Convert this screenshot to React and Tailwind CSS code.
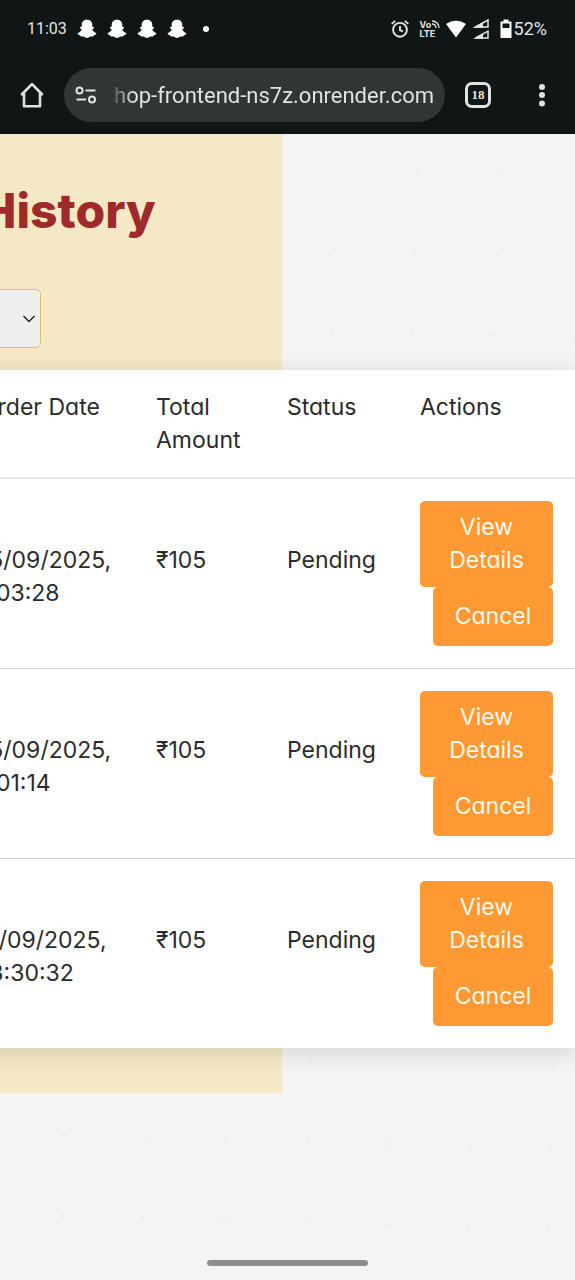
import React from "react";

const orders = [
  { id: 1, date: "15/09/2025,", time: "1:03:28", total: "₹105", status: "Pending" },
  { id: 2, date: "15/09/2025,", time: "1:01:14", total: "₹105", status: "Pending" },
  { id: 3, date: "11/09/2025,", time: "13:30:32", total: "₹105", status: "Pending" },
];

function Ghost() {
  return (
    <svg viewBox="0 0 20 20" className="h-5 w-5 shrink-0 fill-white" aria-hidden="true">
      <path d="M10 .8C6.800 .8 4.800 2.900 4.700 5.600L4.800 7.800C4.200 8 3.400 7.800 3 8.200C2.700 8.800 3.300 9.500 4.700 10.100C4.600 11.500 2.900 13.400 .7 14.300C.4 15.200 1.500 16 3.300 16.400C3.700 16.900 3.700 17.400 4.300 17.500C5.300 17.600 6.200 17.300 7.200 17.800C8 18.300 8.800 19 10 19C11.200 19 12 18.300 12.800 17.800C13.800 17.300 14.700 17.600 15.700 17.500C16.300 17.400 16.300 16.900 16.700 16.400C18.500 16 19.600 15.200 19.300 14.300C17.100 13.400 15.400 11.500 15.300 10.100C16.700 9.500 17.300 8.800 17 8.200C16.600 7.800 15.800 8 15.200 7.800L15.300 5.600C15.200 2.900 13.200 .8 10 .8Z" />
    </svg>
  );
}

function StatusBar() {
  return (
    <div className="flex h-[58px] items-center justify-between pr-7 pl-[27px] text-white">
      <div className="flex items-center gap-[10px]">
        <span className="font-[Roboto,sans-serif] text-[16px] leading-5 text-[#e4e6e6]">11:03</span>
        <Ghost />
        <Ghost />
        <Ghost />
        <Ghost />
        <span className="ml-[6px] h-[6px] w-[6px] rounded-full bg-white" />
      </div>
      <div className="flex items-center">
        <svg viewBox="0 0 20 20" className="h-5 w-5 fill-none stroke-[#e4e6e6]" strokeWidth="1.9" aria-hidden="true">
          <circle cx="10" cy="10.800" r="6.900" />
          <path d="M10 7V11.300L13 12.300M1.700 4.900L5.200 1.900M18.300 4.900L14.800 1.900" />
        </svg>
        <div className="relative ml-[10px] w-5 font-[Inter,sans-serif] text-[9px] leading-[9px] font-bold text-[#e4e6e6]">
          <div>Vo</div>
          <div>LTE</div>
          <svg viewBox="0 0 8 8" className="absolute top-0 right-0 h-2 w-2 fill-none stroke-[#e4e6e6]" strokeWidth="1.300" aria-hidden="true">
            <path d="M0 1C4 1 7 4 7 8M0 4C2.500 4 4 5.500 4 8" />
          </svg>
        </div>
        <svg viewBox="0 0 20 18" className="ml-[6px] h-[18px] w-5 fill-white" aria-hidden="true">
          <path d="M0 4C6-.5 14-.5 20 4L10 17.500Z" />
        </svg>
        <svg viewBox="0 0 16 20" className="ml-[7px] h-5 w-4 fill-none stroke-[#e4e6e6]" strokeWidth="1.500" aria-hidden="true">
          <path d="M2.500 8L15 1V8ZM2.500 19L15 12.200V19Z" />
          <path d="M0 8.800L10 3.200V8.800ZM0 19.800L10 14.500V19.800Z" fill="#e4e6e6" stroke="none" />
        </svg>
        <svg viewBox="0 0 12 20" className="ml-[11px] h-5 w-3" aria-hidden="true">
          <path d="M3.500 .5H8.500V2.500H11.500V19H.5V2.500H3.500Z" fill="white" />
          <path d="M2.500 4.500H9.500V9H2.500Z" fill="#101515" />
        </svg>
        <span className="ml-[2px] font-[Roboto,sans-serif] text-[18px] leading-5 text-[#e4e6e6]">52%</span>
      </div>
    </div>
  );
}

function AddressBar() {
  return (
    <div className="flex h-[76px] items-start pt-[10px] pr-[22px] pl-5">
      <button type="button" aria-label="Home" className="mt-[14px] h-[26px] w-6 shrink-0">
        <svg viewBox="0 0 24 26" className="h-[26px] w-6 fill-none stroke-[#dfe3e1]" strokeWidth="2.600" strokeLinejoin="round">
          <path d="M1.200 13L12 2.200L22.800 13M4 11V24.300H20V11" />
        </svg>
      </button>
      <div className="ml-5 flex h-[54px] min-w-0 flex-1 items-center rounded-full bg-[#303635] pr-[11px] pl-[11px]">
        <button type="button" aria-label="Site settings" className="h-5 w-[22px] shrink-0">
          <svg viewBox="0 0 22 20" className="h-5 w-[22px] fill-none stroke-[#dfe3e1]" strokeWidth="2">
            <circle cx="4.500" cy="5.500" r="3" />
            <circle cx="17" cy="14.500" r="3" />
            <path d="M10.500 5.500H20.500M1.500 14.500H11" />
          </svg>
        </button>
        <div className="ml-3 flex min-w-0 flex-1 justify-end overflow-hidden pt-[2px] [mask-image:linear-gradient(to_right,transparent,black_24px)]">
          <span className="font-[Roboto,sans-serif] text-[22px] leading-[30px] whitespace-nowrap text-[#dfe3e1]">
            hop-frontend-ns7z.onrender.com
          </span>
        </div>
      </div>
      <button
        type="button"
        aria-label="18 open tabs"
        className="mt-[14px] ml-5 h-[26px] w-[26px] shrink-0 rounded-[7px] border-[3px] border-[#dfe3e1] text-center font-['Liberation_Serif',serif] text-[13px] leading-[20px] font-bold text-[#dfe3e1]"
      >
        18
      </button>
      <button type="button" aria-label="More options" className="mt-[14px] ml-10 h-[26px] w-[22px] shrink-0">
        <svg viewBox="0 0 22 26" className="h-[26px] w-[22px] fill-[#dfe3e1]">
          <circle cx="11" cy="5" r="3" />
          <circle cx="11" cy="13" r="3" />
          <circle cx="11" cy="21.500" r="3" />
        </svg>
      </button>
    </div>
  );
}

function OrdersTable() {
  return (
    <table className="w-[617px] shrink-0 table-fixed border-collapse bg-white text-left text-[23px] leading-[33px] text-[#2b2b2b] shadow-[0_4px_22px_rgba(0,0,0,0.14)]">
      <colgroup>
        <col />
        <col className="w-[131px]" />
        <col className="w-[133px]" />
        <col className="w-[177px]" />
      </colgroup>
      <thead>
        <tr className="h-[108px] border-b-2 border-[#e8e8e8] align-top">
          <th className="px-[22px] pt-[21px] font-normal whitespace-nowrap">Order Date</th>
          <th className="px-[22px] pt-[21px] font-normal">Total Amount</th>
          <th className="px-[22px] pt-[21px] font-normal">Status</th>
          <th className="px-[22px] pt-[21px] font-normal">Actions</th>
        </tr>
      </thead>
      <tbody>
        {orders.map((order) => (
          <tr key={order.id} className="border-b border-[#cfcfcf] align-top last:border-b-0">
            <td className="px-[22px] pt-[65px] whitespace-nowrap">
              {order.date}
              <br />
              {order.time}
            </td>
            <td className="px-[22px] pt-[65px]">{order.total}</td>
            <td className="px-[22px] pt-[65px]">{order.status}</td>
            <td className="px-[22px] py-[22px]">
              <div className="flex flex-col">
                <button type="button" className="rounded-[5px] bg-[#ff9933] px-[22px] py-[10px] text-[#fff8ec]">
                  View Details
                </button>
                <button type="button" className="ml-[13px] rounded-[5px] bg-[#ff9933] py-[13px] text-[#fff8ec]">
                  Cancel
                </button>
              </div>
            </td>
          </tr>
        ))}
      </tbody>
    </table>
  );
}

export default function App() {
  return (
    <div className="flex min-h-screen flex-col overflow-hidden bg-[#f4f4f4] font-[Inter,sans-serif] [font-feature-settings:'cv11']">
      <header className="bg-[#101515]">
        <StatusBar />
        <AddressBar />
      </header>
      <main className="relative flex flex-1 flex-col">
        <svg className="absolute inset-0 h-full w-full" aria-hidden="true">
          <defs>
            <pattern id="dots" width="81.200" height="81.200" patternUnits="userSpaceOnUse" patternTransform="translate(297 -8) rotate(1.700)">
              <circle cx="40.600" cy="40.600" r="2" fill="#eeeeee" />
            </pattern>
          </defs>
          <rect width="100%" height="100%" fill="url(#dots)" />
        </svg>
        <section className="relative mr-[51%] bg-[#f4e8c6] pb-[45px]">
          <div className="flex justify-end pt-[42px] pr-[126px]">
            <h1 className="text-[48px] leading-[70px] font-extrabold whitespace-nowrap text-[#a02a2a]">Order History</h1>
          </div>
          <div className="mt-[43px] flex justify-end pr-[241px]">
            <div className="relative w-[260px] shrink-0">
              <select
                aria-label="Filter orders by status"
                className="h-[59px] w-full appearance-none rounded-[5px] border border-[#dcc164] bg-[#efefef] px-4 text-[22px]"
              >
                <option>All</option>
                <option>Pending</option>
              </select>
              <svg viewBox="0 0 12 8" className="pointer-events-none absolute top-[26px] right-[6px] h-2 w-3 fill-none stroke-[#222]" strokeWidth="1.400" aria-hidden="true">
                <path d="M.5 1L6 6.500L11.500 1" />
              </svg>
            </div>
          </div>
          <div className="mt-[22px] -mr-[104.080%] flex justify-end">
            <OrdersTable />
          </div>
        </section>
        <div className="relative mt-auto flex justify-center pb-[14px]">
          <div className="h-[6px] w-[28%] rounded-full bg-[#8e8e8e]" />
        </div>
      </main>
    </div>
  );
}
